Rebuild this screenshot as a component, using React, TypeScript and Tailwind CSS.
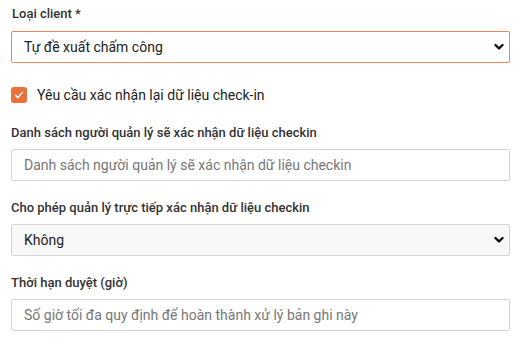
import { useState } from 'react';

const font = { fontFamily: 'Roboto, "Noto Sans", sans-serif' };

function Chevron() {
  return (
    <svg className="pointer-events-none absolute right-[6px] top-1/2 h-[8px] w-[10px] -translate-y-1/2" viewBox="0 0 10 8" fill="none">
      <path d="M1.5 2l3.5 3.5L8.5 2" stroke="#111" strokeWidth={2.4} strokeLinecap="round" strokeLinejoin="round" />
    </svg>
  );
}

function Label({ children }: { children: React.ReactNode }) {
  return <label className="mb-[6px] block text-[13px] leading-[20px] font-medium text-[#333]">{children}</label>;
}

export default function App() {
  const [clientType, setClientType] = useState('self');
  const [confirm, setConfirm] = useState(true);
  const [direct, setDirect] = useState('no');

  return (
    <div className="h-[359px] w-[522px] bg-white pl-[11px] pr-[12px] pt-[4px]" style={font}>
      <label className="mb-[7px] block pl-[1px] text-[13px] leading-[20px] font-medium text-[#333]">Loại client *</label>
      <div className="relative">
        <select
          value={clientType}
          onChange={(e) => setClientType(e.target.value)}
          className="block h-[32px] w-full appearance-none rounded-[2px] border border-[#f0855a] bg-white pl-[12px] text-[14px] text-[#222] outline-none"
        >
          <option value="self">Tự đề xuất chấm công</option>
          <option value="auto">Tự động</option>
        </select>
        <Chevron />
      </div>

      <label className="mt-[22px] mb-[18px] flex h-[20px] cursor-pointer items-center gap-[10px]" onClick={() => setConfirm(!confirm)}>
        <span className={`flex h-[16px] w-[16px] items-center justify-center rounded-[3px] ${confirm ? 'bg-[#e8713c]' : 'border border-[#999] bg-white'}`}>
          {confirm && (
            <svg viewBox="0 0 16 16" className="h-[12px] w-[12px]" fill="none">
              <path d="M3.5 8.5l3 3 6-7" stroke="#fff" strokeWidth={2} strokeLinecap="round" strokeLinejoin="round" />
            </svg>
          )}
        </span>
        <span className="text-[14px] text-[#222]">Yêu cầu xác nhận lại dữ liệu check-in</span>
      </label>

      <Label>Danh sách người quản lý sẽ xác nhận dữ liệu checkin</Label>
      <input
        placeholder="Danh sách người quản lý sẽ xác nhận dữ liệu checkin"
        className="mb-[17px] block h-[32px] w-full rounded-[2px] border border-[#d4d4d4] bg-white pl-[12px] text-[14px] text-[#222] outline-none placeholder:text-[#777]"
      />

      <Label>Cho phép quản lý trực tiếp xác nhận dữ liệu checkin</Label>
      <div className="relative mb-[17px]">
        <select
          value={direct}
          onChange={(e) => setDirect(e.target.value)}
          className="block h-[32px] w-full appearance-none rounded-[2px] border border-[#d4d4d4] bg-[#f7f7f7] pl-[12px] text-[14px] text-[#222] outline-none"
        >
          <option value="no">Không</option>
          <option value="yes">Có</option>
        </select>
        <Chevron />
      </div>

      <Label>Thời hạn duyệt (giờ)</Label>
      <input
        placeholder="Số giờ tối đa quy định để hoàn thành xử lý bản ghi này"
        className="block h-[32px] w-full rounded-[2px] border border-[#d4d4d4] bg-white pl-[12px] text-[14px] text-[#222] outline-none placeholder:text-[#777]"
      />
    </div>
  );
}
